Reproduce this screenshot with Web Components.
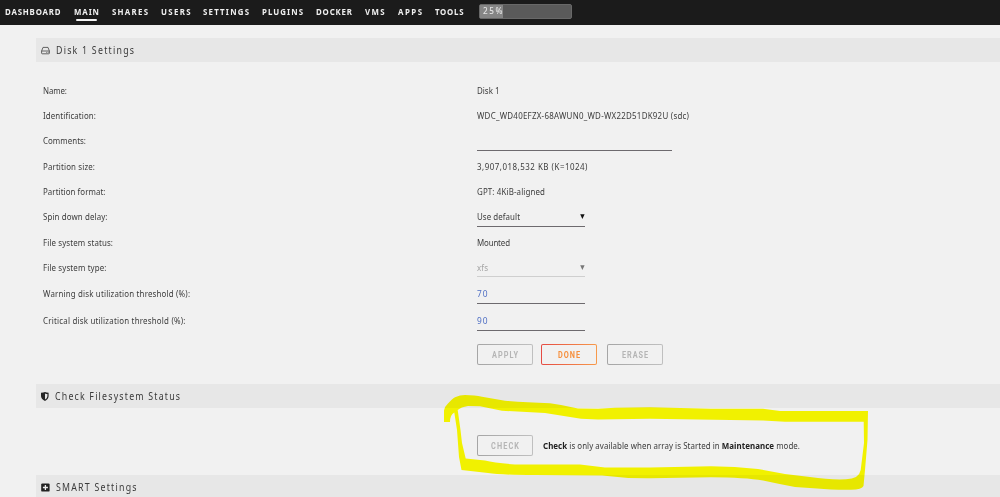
<!DOCTYPE html>
<html lang="en">
<head>
<meta charset="utf-8">
<title>Main - Disk 1</title>
<style>
	html, body {
		margin: 0;
		height: 497px;
		overflow: hidden;
		background: #f1f1f1;
	}
</style>
</head>
<body>
<disk-page></disk-page>

<script>
const define = (name, html, setup) => {
	const template = document.createElement('template')
	template.innerHTML = html

	customElements.define(name, class extends HTMLElement {
		constructor() {
			super()
			this.attachShadow({ mode: 'open' })
			this.shadowRoot.appendChild(template.content.cloneNode(true))
		}

		connectedCallback() {
			if (setup) setup(this, this.shadowRoot)
		}
	})
}

// Condenses the glyphs by the inherited --condense, then tracks the line
// out to the width given in its attribute
define('tracked-text', `
	<style>
		:host {
			display: inline-block;
			white-space: nowrap;
		}

		span {
			display: inline-block;
			transform-origin: 0 50%;
		}
	</style>
	<span><slot></slot></span>
`, (host, root) => {
	const condense = Number(getComputedStyle(host).getPropertyValue('--condense')) || 1
	const target = Number(host.getAttribute('width'))
	const length = host.textContent.length
	const span = root.querySelector('span')
	const natural = span.getBoundingClientRect().width
	span.style.letterSpacing = (target / condense - natural) / (length - 1) + 'px'
	if (condense !== 1) span.style.transform = `scaleX(${condense})`
	host.style.width = target + 'px'
})

define('nav-item', `
	<style>
		:host {
			display: flex;
			flex-direction: column;
			align-items: center;
			height: 25px;
			box-sizing: border-box;
			padding-top: 5px;
			line-height: 14px;
		}

		i {
			display: none;
			width: 21px;
			height: 1.5px;
			border-radius: 1px;
			background: #f4f4f4;
		}

		:host([active]) i { display: block; }
	</style>
	<slot></slot>
	<i></i>
`)

define('usage-bar', `
	<style>
		:host {
			display: block;
			width: 93px;
			height: 15px;
			margin: 4px 0 0 2.5px;
			box-sizing: border-box;
			background: #5a5a5a;
			border: 1px solid #686868;
			border-radius: 2px;
		}

		div {
			width: 23px;
			height: 13px;
			box-sizing: border-box;
			padding-left: 3px;
			background: #858585;
			color: #e4e4e4;
			font-size: 8.5px;
			font-weight: 500;
			line-height: 12px;
		}
	</style>
	<div><slot></slot></div>
`)

define('nav-bar', `
	<style>
		:host {
			--condense: 0.96;
			display: flex;
			gap: 13px;
			height: 25px;
			padding-left: 5px;
			background: #1b1b1b;
			color: #f0f0f0;
			font: bold 8.2px "Noto Sans", sans-serif;
		}
	</style>
	<nav-item><tracked-text width="55.5">DASHBOARD</tracked-text></nav-item>
	<nav-item active><tracked-text width="25">MAIN</tracked-text></nav-item>
	<nav-item><tracked-text width="36">SHARES</tracked-text></nav-item>
	<nav-item><tracked-text width="29.5">USERS</tracked-text></nav-item>
	<nav-item><tracked-text width="46">SETTINGS</tracked-text></nav-item>
	<nav-item><tracked-text width="41">PLUGINS</tracked-text></nav-item>
	<nav-item><tracked-text width="36">DOCKER</tracked-text></nav-item>
	<nav-item><tracked-text width="19.5">VMS</tracked-text></nav-item>
	<nav-item><tracked-text width="24">APPS</tracked-text></nav-item>
	<nav-item><tracked-text width="28.5">TOOLS</tracked-text></nav-item>
	<usage-bar><tracked-text width="19.5">25%</tracked-text></usage-bar>
`)

define('section-title', `
	<style>
		:host {
			--condense: 0.88;
			display: flex;
			align-items: center;
			height: 24px;
			margin-left: 35.5px;
			padding-left: 5.5px;
			box-sizing: border-box;
			background: #e7e7e7;
			color: #3a3a3a;
			font: 10px "Noto Sans", sans-serif;
		}

		::slotted(svg) {
			display: block;
			margin-right: 5.5px;
		}
	</style>
	<slot></slot>
`)

define('setting-row', `
	<style>
		:host {
			display: grid;
			grid-template-columns: 434px 1fr;
			height: 25px;
		}

		:host([tall]) { height: 27px; }

		div {
			display: flex;
			align-items: center;
		}
	</style>
	<div><slot name="label"></slot></div>
	<div><slot></slot></div>
`)

define('text-field', `
	<style>
		:host {
			display: flex;
			align-items: center;
			width: 108px;
			height: 20px;
			padding-top: 1px;
			box-sizing: border-box;
			border-bottom: 1px solid #6d6a6e;
			color: #4f6fc4;
			font-size: 9.5px;
		}

		:host([wide]) { width: 194.5px; }
	</style>
	<slot></slot>
`)

define('select-field', `
	<style>
		:host {
			display: flex;
			align-items: center;
			justify-content: space-between;
			width: 108px;
			height: 20px;
			padding-top: 1px;
			box-sizing: border-box;
			border-bottom: 1px solid #6d6a6e;
		}

		:host([disabled]) {
			height: 19px;
			padding-top: 0;
			color: #a3a3a3;
			border-color: #cfcfcf;
		}

		svg { color: #111; }
		:host([disabled]) svg { color: #777; }
	</style>
	<slot></slot>
	<svg width="5" height="5" viewBox="0 0 5 5"><path d="M.2.3h4.4L2.4 4.9z" fill="currentColor"/></svg>
`)

define('push-button', `
	<style>
		:host {
			display: flex;
			align-items: center;
			justify-content: center;
			width: 56px;
			height: 21px;
			box-sizing: border-box;
			border-radius: 2px;
			padding: 1.3px;
			background: linear-gradient(90deg, #a5a5a5, #c0c0c0);
			color: #b5b5b5;
			font: bold 8.3px Roboto, "Noto Sans", sans-serif;
		}

		:host([primary]) {
			background: linear-gradient(90deg, #e54a43, #f79a4b);
			color: #f68f3c;
		}

		div {
			display: flex;
			align-items: center;
			justify-content: center;
			width: 100%;
			height: 100%;
			border-radius: 1px;
			background: #f1f1f1;
		}
	</style>
	<div><slot></slot></div>
`)

// Freehand highlighter loop drawn over the check section
define('marker-loop', `
	<style>
		:host {
			position: absolute;
			left: 0;
			top: 0;
			pointer-events: none;
			mix-blend-mode: multiply;
		}

		svg { display: block; }
	</style>
	<svg width="1000" height="497" viewBox="0 0 1000 497">
		<path fill="#ffff00" fill-rule="evenodd" d="M444 422V410.5Q445 406 447.5 404Q452 399 455 397.3Q460 395 465 395Q475 395 482 396.7L505 400.7Q525 402.3 550 403.3Q563 405 578 408.5L598 408.7L615 407.7L650 407.3L711 408.7H763L780 411H868L867.5 440L865 470L863.5 486Q862 489.5 851 489.8Q832 490 817 488.5L795 487Q779 484 763 480.5Q745 477.5 711 477.3L650 478.3Q625 478.5 602 475.5L535 475Q500 475 488 473L461.5 470L459 457L457 430L454.3 412.6Q450 415 450 422Z
			M457.7 410Q461 407 468 406L480 406.3L502 410.7L545 413L581 418.8L598 419.5L650 418.7L763 420.5L785 421.7H863.7L864 443L860.7 470Q859 479 846 479.3Q830 480 810 477L785 474L758 469Q735 466.5 711 466.3L650 467.5H605L580 464.5H515Q495 463 485 460.5L465.7 458.5L462 443L460.5 430Z"/>
	</svg>
`)

define('disk-page', `
	<style>
		:host {
			--condense: 0.88;
			display: block;
			position: relative;
			height: 497px;
			overflow: hidden;
			isolation: isolate;
			background: #f1f1f1;
			color: #3c3c3c;
			font: 9px "Noto Sans", sans-serif;
		}

		.settings {
			padding: 16px 0 0 43px;
			height: 322px;
			box-sizing: border-box;
		}

		.gap { margin-top: 1px; }

		.buttons {
			display: flex;
			gap: 8px;
			margin: 10px 0 0 434px;
		}

		.buttons push-button:last-child { margin-left: 2px; }

		.check {
			display: flex;
			align-items: center;
			gap: 10px;
			height: 67px;
			padding: 8px 0 0 477px;
			box-sizing: border-box;
		}

		b { color: #222; }
	</style>
	<nav-bar></nav-bar>
	<section-title style="margin-top: 13px">
		<svg width="9" height="9" viewBox="0 0 9 9" fill="none" stroke="#555" stroke-width=".9"><path d="M.6 5 2 1.4h5L8.4 5v2.2q0 .6-.6.6H1.2q-.6 0-.6-.6zM.6 5h7.8M5.3 6.4h.8M6.8 6.4h.8"/></svg>
		<tracked-text width="78">Disk 1 Settings</tracked-text>
	</section-title>
	<div class="settings">
		<setting-row><tracked-text slot="label" width="24">Name:</tracked-text><tracked-text width="22.5">Disk 1</tracked-text></setting-row>
		<setting-row><tracked-text slot="label" width="53">Identification:</tracked-text><tracked-text width="212">WDC_WD40EFZX-68AWUN0_WD-WX22D51DK92U (sdc)</tracked-text></setting-row>
		<setting-row><tracked-text slot="label" width="43">Comments:</tracked-text><text-field wide></text-field></setting-row>
		<setting-row class="gap"><tracked-text slot="label" width="52">Partition size:</tracked-text><tracked-text width="110.5">3,907,018,532 KB (K=1024)</tracked-text></setting-row>
		<setting-row><tracked-text slot="label" width="62.5">Partition format:</tracked-text><tracked-text width="68">GPT: 4KiB-aligned</tracked-text></setting-row>
		<setting-row><tracked-text slot="label" width="64.5">Spin down delay:</tracked-text><select-field><tracked-text width="43">Use default</tracked-text></select-field></setting-row>
		<setting-row class="gap"><tracked-text slot="label" width="70">File system status:</tracked-text><tracked-text width="33">Mounted</tracked-text></setting-row>
		<setting-row><tracked-text slot="label" width="63.5">File system type:</tracked-text><select-field disabled><tracked-text width="11">xfs</tracked-text></select-field></setting-row>
		<setting-row tall><tracked-text slot="label" width="147">Warning disk utilization threshold (%):</tracked-text><text-field><tracked-text width="10.5">70</tracked-text></text-field></setting-row>
		<setting-row tall><tracked-text slot="label" width="142.5">Critical disk utilization threshold (%):</tracked-text><text-field><tracked-text width="10.5">90</tracked-text></text-field></setting-row>
		<div class="buttons">
			<push-button><tracked-text width="26">APPLY</tracked-text></push-button>
			<push-button primary><tracked-text width="22">DONE</tracked-text></push-button>
			<push-button><tracked-text width="26">ERASE</tracked-text></push-button>
		</div>
	</div>
	<section-title>
		<svg width="8" height="9" viewBox="0 0 8 9"><path d="M0 .7Q2.5.7 4 0 5.5.7 7.6.7v3.6Q7.3 7.5 4 8.9.4 7.5 0 4.3z" fill="#262626"/><path d="M4 1.4Q5 1.9 6.4 1.9v2.4Q6.1 6.5 4 7.6z" fill="#e7e7e7"/></svg>
		<tracked-text width="125">Check Filesystem Status</tracked-text>
	</section-title>
	<div class="check">
		<push-button><tracked-text width="28">CHECK</tracked-text></push-button>
		<tracked-text width="257"><b>Check</b> is only available when array is Started in <b>Maintenance</b> mode.</tracked-text>
	</div>
	<section-title>
		<svg width="9" height="9" viewBox="0 0 9 9"><rect x=".2" y=".4" width="8.4" height="8.2" rx="1.2" fill="#222"/><path d="M4.4 2v5M1.9 4.5h5" stroke="#eee" stroke-width="1.3"/></svg>
		<tracked-text width="80.5">SMART Settings</tracked-text>
	</section-title>
	<marker-loop></marker-loop>
`)
</script>
</body>
</html>
